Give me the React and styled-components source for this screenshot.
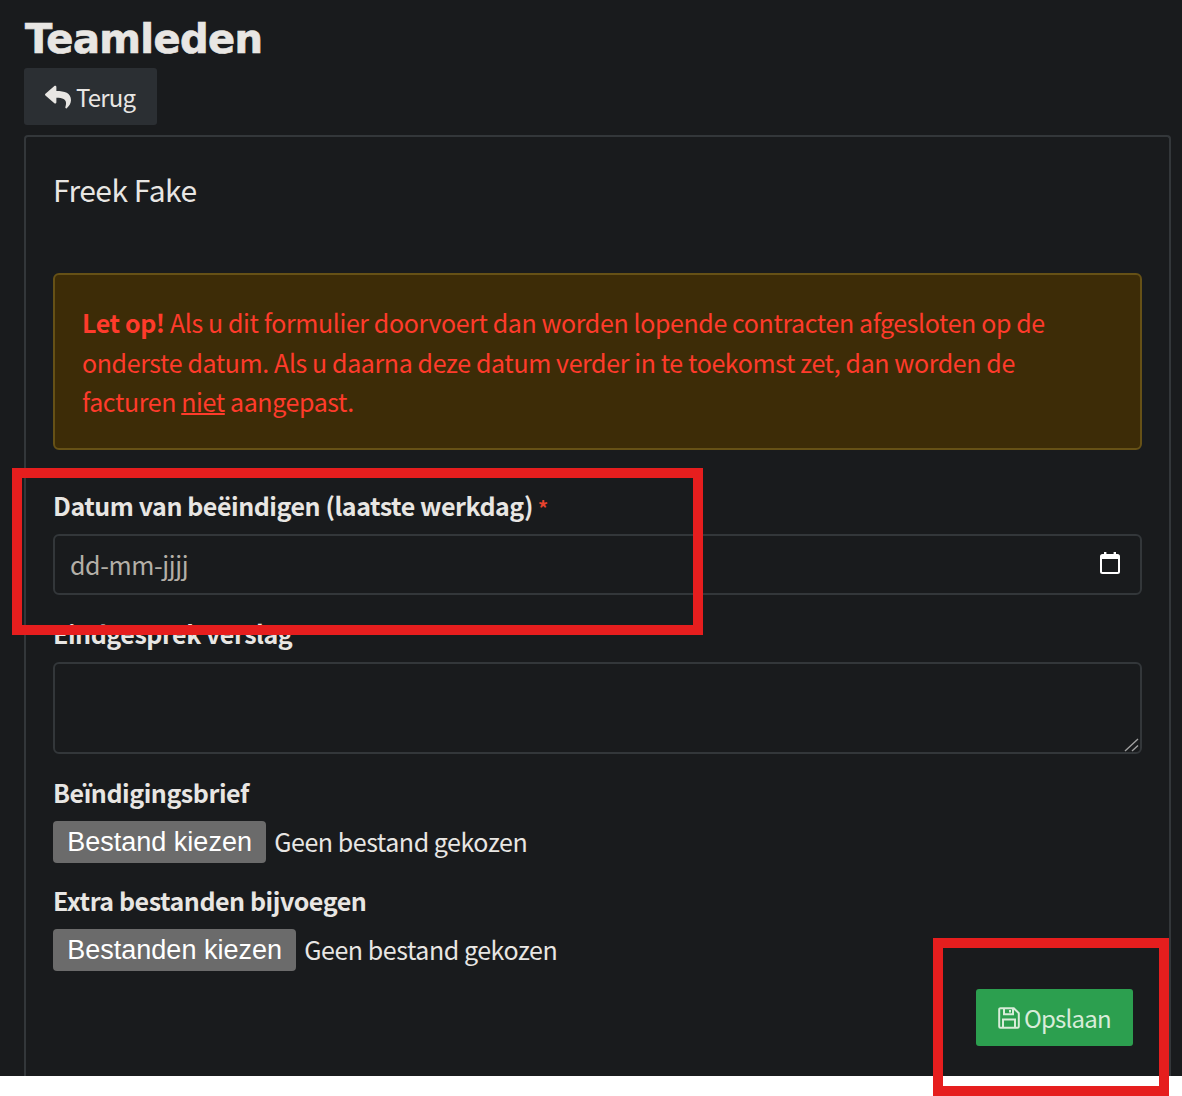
import React from "react";
import styled, { createGlobalStyle } from "styled-components";
import { FaReply } from "react-icons/fa";

const Global = createGlobalStyle`
  html, body { margin: 0; padding: 0; background: #fff; }
  * { box-sizing: border-box; }
`;
const sans = `"Noto Sans CJK SC", "Noto Sans", sans-serif`;

const Stage = styled.div`
  position: relative;
  width: 1182px;
  height: 1096px;
  overflow: hidden;
`;
const Page = styled.div`
  height: 1076px;
  overflow: hidden;
  background: #191b1d;
  color: #e8e6e3;
  padding: 0 11px 0 24px;
  font-family: ${sans};
  font-size: 25px;
  letter-spacing: -0.4px;
  line-height: 39.5px;
`;
const Title = styled.h1`
  margin: 0;
  padding: 15px 0 0 1px;
  height: 68px;
  font-family: "DejaVu Sans", sans-serif;
  font-weight: 700;
  font-size: 40px;
  line-height: 48px;
  letter-spacing: -0.6px;
  -webkit-text-stroke: 0.7px #e8e6e3;
  color: #e8e6e3;
`;
const BackButton = styled.button`
  display: flex;
  align-items: center;
  gap: 5px;
  width: 133px;
  height: 57px;
  padding: 0 0 0 21px;
  background: #2b2f33;
  border: 0;
  border-radius: 3px;
  color: #e8e6e3;
  font: inherit;
  font-size: 24px;
  letter-spacing: -0.8px;
`;
const Card = styled.section`
  margin-top: 10px;
  height: 1000px;
  border: 2px solid #33373a;
  border-bottom: 0;
  border-radius: 4px 4px 0 0;
  padding: 32px 27px 0;
`;
const CardTitle = styled.h2`
  margin: 0 0 64px;
  font-weight: 400;
  font-size: 30px;
  letter-spacing: -0.5px;
  line-height: 40px;
  color: #e8e6e3;
`;
const Alert = styled.div`
  height: 177px;
  padding: 28px 27px;
  background: #3d2c07;
  border: 2px solid #665116;
  border-radius: 6px;
  color: #ff3b2b;
  margin-bottom: 36px;
`;
const Strong = styled.strong`
  font-weight: 700;
`;
const Under = styled.span`
  text-decoration: underline;
  text-decoration-thickness: 2px;
`;
const Field = styled.div`
  margin-bottom: ${(p) => p.$mb}px;
`;
const Label = styled.label`
  display: block;
  font-weight: 700;
  height: 40px;
  line-height: 38px;
  letter-spacing: -0.45px;
  margin-bottom: ${(p) => p.$mb || 0}px;
`;
const Required = styled.span`
  color: #e8432e;
  font-size: 20px;
  margin-left: 5px;
`;
const DateBox = styled.div`
  display: flex;
  align-items: center;
  justify-content: space-between;
  height: 61px;
  padding: 0 19px 0 15px;
  border: 2px solid #33373a;
  border-radius: 6px;
  color: #b3afa7;
`;
const CalendarGlyph = styled.svg`
  width: 22px;
  height: 24px;
  margin-bottom: 3px;
`;
const AreaWrap = styled.div`
  position: relative;
  height: 92px;
`;
const Area = styled.textarea`
  display: block;
  width: 100%;
  height: 92px;
  background: transparent;
  border: 2px solid #33373a;
  border-radius: 6px;
  resize: none;
  outline: none;
`;
const Grip = styled.svg`
  position: absolute;
  right: 2px;
  bottom: 2px;
  width: 16px;
  height: 16px;
`;
const FileRow = styled.div`
  display: flex;
  align-items: center;
  gap: 8px;
  height: 42px;
`;
const FileButton = styled.button`
  height: 42px;
  padding: 0 14.3px;
  background: #6b6b6b;
  border: 0;
  border-radius: 4px;
  color: #fff;
  font-family: "Liberation Sans", Arial, sans-serif;
  font-size: 27px;
  line-height: 42px;
`;
const FileText = styled.span`
  color: #e8e6e3;
  letter-spacing: -0.45px;
`;
const Actions = styled.div`
  display: flex;
  justify-content: flex-end;
  padding-right: 9px;
  margin-top: 18px;
`;
const SaveButton = styled.button`
  display: flex;
  align-items: center;
  gap: 4px;
  width: 157px;
  height: 57px;
  padding: 0 0 0 22px;
  background: #2c9f4f;
  border: 0;
  border-radius: 3px;
  color: #d8ecd9;
  font: inherit;
  font-size: 24px;
  letter-spacing: -0.8px;
`;
const Mark = styled.div`
  position: absolute;
  left: ${(p) => p.$x}px;
  top: ${(p) => p.$y}px;
  width: ${(p) => p.$w}px;
  height: ${(p) => p.$h}px;
  border: 10px solid #e61e1e;
  pointer-events: none;
`;

const CalendarIcon = () => (
  <CalendarGlyph viewBox="0 0 22 24" fill="none" aria-hidden="true">
    <rect x="2" y="4" width="18" height="18" rx="1.5" stroke="#fff" strokeWidth="2" />
    <rect x="2" y="4" width="18" height="4" fill="#fff" />
    <rect x="5" y="1" width="2.4" height="4" fill="#fff" />
    <rect x="14.6" y="1" width="2.4" height="4" fill="#fff" />
  </CalendarGlyph>
);

const SaveIcon = () => (
  <svg width="22" height="22" viewBox="0 0 22 22" fill="none" stroke="currentColor" strokeWidth="2" aria-hidden="true">
    <path d="M2.5 1.2 H15.8 L20.8 6.2 V19.5 a1.3 1.3 0 0 1 -1.3 1.3 H2.5 a1.3 1.3 0 0 1 -1.3 -1.3 V2.5 a1.3 1.3 0 0 1 1.3 -1.3 Z" />
    <path d="M6 1.2 V7.2 H15 V1.2" />
    <path d="M5 20.8 V12.5 H17 V20.8" />
    <path d="M12 3 V5.5" />
  </svg>
);

export default function App() {
  return (
    <Stage>
      <Global />
      <Page>
        <Title>Teamleden</Title>
        <BackButton>
          <FaReply size={26} />
          Terug
        </BackButton>
        <Card>
          <CardTitle>Freek Fake</CardTitle>
          <Alert>
            <Strong>Let op!</Strong> Als u dit formulier doorvoert dan worden lopende contracten afgesloten op de onderste datum. Als u daarna deze datum verder in te toekomst zet, dan worden de facturen <Under>niet</Under> aangepast.
          </Alert>
          <Field $mb={19}>
            <Label $mb={8}>
              Datum van beëindigen (laatste werkdag)<Required>*</Required>
            </Label>
            <DateBox>
              dd-mm-jjjj
              <CalendarIcon />
            </DateBox>
          </Field>
          <Field $mb={19}>
            <Label $mb={8}>Eindgesprek verslag</Label>
            <AreaWrap>
              <Area />
              <Grip viewBox="0 0 16 16" aria-hidden="true">
                <path d="M1 15 L14 3 M8 15 L14 9.5" stroke="#a0a0a0" strokeWidth="1.4" fill="none" />
              </Grip>
            </AreaWrap>
          </Field>
          <Field $mb={18}>
            <Label $mb={8}>Beïndigingsbrief</Label>
            <FileRow>
              <FileButton>Bestand kiezen</FileButton>
              <FileText>Geen bestand gekozen</FileText>
            </FileRow>
          </Field>
          <Field $mb={0}>
            <Label $mb={8}>Extra bestanden bijvoegen</Label>
            <FileRow>
              <FileButton>Bestanden kiezen</FileButton>
              <FileText>Geen bestand gekozen</FileText>
            </FileRow>
          </Field>
          <Actions>
            <SaveButton>
              <SaveIcon />
              Opslaan
            </SaveButton>
          </Actions>
        </Card>
      </Page>
      <Mark $x={12} $y={468} $w={691} $h={167} />
      <Mark $x={933} $y={938} $w={236} $h={158} />
    </Stage>
  );
}
